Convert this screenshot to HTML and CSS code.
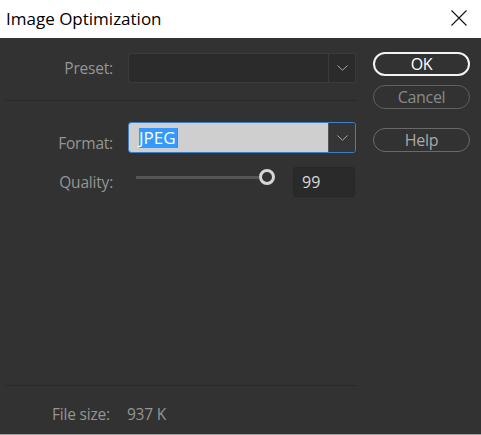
FILE: index.html
```html
<!DOCTYPE html>
<html lang="en">
<head>
<meta charset="utf-8">
<title>Image Optimization</title>
<link rel="stylesheet" href="styles.css">
</head>
<body>
<div class="window">
  <header class="titlebar">
    <span class="title">Image Optimization</span>
    <svg class="close" width="16" height="16" viewBox="0 0 16 16" aria-hidden="true">
      <path d="M0.5 0.5 L15.5 15.5 M15.5 0.5 L0.5 15.5" stroke="#111" stroke-width="1.1" fill="none"/>
    </svg>
  </header>
  <main class="dialog">
    <section class="form">
      <div class="row preset-row">
        <span class="label">Preset:</span>
        <div class="select select-dark">
          <span class="select-value"></span>
          <span class="select-arrow">
            <svg width="11" height="6" viewBox="0 0 11 6" aria-hidden="true"><path d="M0.5 0.5 L5.5 5.2 L10.5 0.5" stroke="#a8a8a8" stroke-width="1" fill="none"/></svg>
          </span>
        </div>
      </div>
      <div class="sep sep-top"></div>
      <div class="row format-row">
        <span class="label label-low">Format:</span>
        <div class="select select-focus">
          <span class="select-value"><span class="selected-text">JPEG</span><span class="caret"></span></span>
          <span class="select-arrow">
            <svg width="11" height="6" viewBox="0 0 11 6" aria-hidden="true"><path d="M0.5 0.5 L5.5 5.2 L10.5 0.5" stroke="#a8a8a8" stroke-width="1" fill="none"/></svg>
          </span>
        </div>
      </div>
      <div class="row quality-row">
        <span class="label">Quality:</span>
        <div class="slider">
          <div class="track"></div>
          <div class="thumb"></div>
        </div>
        <div class="num">99</div>
      </div>
      <div class="spacer"></div>
      <div class="sep"></div>
      <div class="row filesize-row">
        <span class="label label-left">File size:</span>
        <span class="filesize">937 K</span>
      </div>
    </section>
    <aside class="buttons">
      <div class="btn btn-ok">OK</div>
      <div class="btn btn-cancel">Cancel</div>
      <div class="btn btn-help">Help</div>
    </aside>
  </main>
</div>
</body>
</html>
```
FILE: styles.css
```css
html, body {
  margin: 0;
  padding: 0;
  background: #323232;
}
body {
  font-family: "Open Sans", "Noto Sans", "Liberation Sans", sans-serif;
  font-size: 15.5px;
}
.window {
  width: 481px;
  height: 435px;
  display: flex;
  flex-direction: column;
  overflow: hidden;
}
.titlebar {
  height: 38px;
  flex: none;
  background: #ffffff;
  display: flex;
  align-items: center;
  justify-content: space-between;
  padding: 0 14px 2px 6px;
  box-sizing: border-box;
}
.title {
  color: #000;
  font-size: 17px;
}
.close {
  display: block;
}
.dialog {
  height: 397px;
  box-sizing: border-box;
  border-bottom: 1px solid #a0a0a0;
  background: #323232;
  display: flex;
}
.form {
  width: 352px;
  margin-left: 5px;
  display: flex;
  flex-direction: column;
  padding-bottom: 10px;
}
.row {
  display: flex;
  align-items: center;
}
.label {
  width: 108px;
  flex: none;
  text-align: right;
  color: #959595;
  margin-right: 15px;
  letter-spacing: -0.2px;
}
.preset-row {
  margin-top: 15px;
  height: 30px;
}
.sep {
  height: 1px;
  background: #2a2a2a;
  flex: none;
}
.sep-top {
  margin-top: 17px;
}
.format-row {
  margin-top: 21px;
  height: 31px;
}
.label-low {
  padding-top: 11px;
}
.select {
  width: 228px;
  height: 100%;
  box-sizing: border-box;
  border-radius: 3px;
  display: flex;
  overflow: hidden;
}
.select-dark {
  background: #2b2b2b;
  border: 1px solid #3b3b3b;
}
.select-focus {
  border: 1px solid #3f7fc6;
}
.select-value {
  flex: 1;
  display: flex;
  align-items: center;
  padding-left: 10px;
}
.select-focus .select-value {
  background: #cfcfcf;
}
.select-arrow {
  width: 26px;
  flex: none;
  display: flex;
  align-items: center;
  justify-content: center;
  border-left: 1px solid #3b3b3b;
}
.select-focus .select-arrow {
  background: #353535;
  border-left: 1px solid #555;
}
.selected-text {
  background: #3399ff;
  color: #fff;
  height: 20px;
  line-height: 20px;
  font-size: 17px;
  padding-right: 1px;
}
.caret {
  width: 1px;
  height: 20px;
  background: #e06010;
}
.quality-row {
  margin-top: 14px;
  height: 30px;
}
.slider {
  display: flex;
  align-items: center;
  padding-left: 8px;
  margin-top: -10px;
}
.track {
  width: 123px;
  height: 3px;
  background: #555555;
}
.thumb {
  width: 16px;
  height: 16px;
  box-sizing: border-box;
  border: 3px solid #d6d6d6;
  border-radius: 50%;
  background: #323232;
}
.num {
  margin-left: 18px;
  width: 62px;
  height: 30px;
  box-sizing: border-box;
  background: #2a2a2a;
  border: 1px solid #262626;
  border-radius: 3px;
  color: #d8d8d8;
  display: flex;
  align-items: center;
  padding-left: 8px;
  font-size: 16px;
}
.spacer {
  flex: 1;
}
.filesize-row {
  margin-top: 18px;
  height: 20px;
}
.label-left {
  width: auto;
  margin-left: 47px;
  margin-right: 17px;
  text-align: left;
}
.filesize {
  color: #959595;
  letter-spacing: -0.2px;
}
.buttons {
  margin-left: 16px;
  width: 97px;
  display: flex;
  flex-direction: column;
  padding-top: 14px;
}
.btn {
  height: 24px;
  box-sizing: border-box;
  border-radius: 12px;
  display: flex;
  align-items: center;
  justify-content: center;
  border: 1px solid #6a6a6a;
  color: #9a9a9a;
  font-size: 16px;
  letter-spacing: -0.3px;
}
.btn-ok {
  border: 2px solid #f2f2f2;
  color: #ffffff;
}
.btn-cancel {
  margin-top: 9px;
  color: #8a8a8a;
  border-color: #606060;
}
.btn-help {
  margin-top: 19px;
  color: #a8a8a8;
}
```
